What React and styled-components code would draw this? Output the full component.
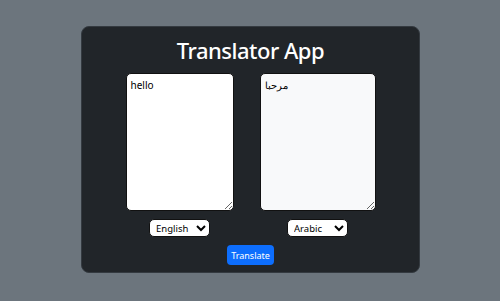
import React, { useState } from "react"
import styled, { createGlobalStyle } from "styled-components"

const GlobalStyle = createGlobalStyle`
    html, body {
        margin: 0;
        padding: 0;
        background-color: #6c757d;
        font-family: "Noto Sans", "Open Sans", sans-serif;
    }
`

const StyledPage = styled.div`
    width: 500px;
    height: 301px;
    box-sizing: border-box;
    padding-top: 26px;
    display: flex;
    justify-content: center;
    align-items: flex-start;
`
const StyledCard = styled.div`
    background-color: #212529;
    border: 1px solid #343a40;
    border-radius: 8px;
    width: 339px;
    height: 247px;
    box-sizing: border-box;
    margin-left: 1px;
    display: flex;
    flex-direction: column;
    align-items: center;
    padding-top: 7px;
`
const StyledTitle = styled.h1`
    color: #fff;
    font-size: 22px;
    font-weight: 500;
    letter-spacing: -0.5px;
    margin: 0;
    line-height: 32px;
`
const StyledRow = styled.div`
    display: flex;
    gap: 26px;
    margin-top: 7px;
`
const StyledColumn = styled.div`
    display: flex;
    flex-direction: column;
    align-items: center;
    gap: 8px;
`
const StyledText = styled.textarea`
    width: ${props => props.$width}px;
    height: 138px;
    box-sizing: border-box;
    background-color: ${props => props.$muted ? "#f8f9fa" : "#fff"};
    color: #000;
    border: 1px solid #111;
    border-radius: 5px;
    padding: 4px 4px;
    font-family: "Noto Sans", "Open Sans", sans-serif;
    font-size: 10px;
    resize: vertical;
    outline: none;
`
const StyledSelect = styled.select`
    width: 61px;
    height: 18px;
    font-family: "Noto Sans", "Open Sans", sans-serif;
    font-size: 9.5px;
    border: 1px solid #111;
    border-radius: 5px;
    background-color: #fff;
    color: #000;
    padding: 0 2px;
`
const StyledButton = styled.button`
    margin-top: 8px;
    background-color: #0d6efd;
    color: #fff;
    border: none;
    border-radius: 4px;
    width: 47px;
    height: 20px;
    font-family: "Noto Sans", "Open Sans", sans-serif;
    font-size: 9px;
    padding: 0;
`

const App = () => {
    const [text, setText] = useState("hello")

    return (
        <>
            <GlobalStyle />
            <StyledPage>
                <StyledCard>
                    <StyledTitle>Translator App</StyledTitle>
                    <StyledRow>
                        <StyledColumn>
                            <StyledText $width={108} value={text} onChange={e => setText(e.target.value)} />
                            <StyledSelect defaultValue="en">
                                <option value="en">English</option>
                                <option value="ar">Arabic</option>
                            </StyledSelect>
                        </StyledColumn>
                        <StyledColumn>
                            <StyledText $width={116} $muted readOnly value="مرحبا" />
                            <StyledSelect defaultValue="ar">
                                <option value="en">English</option>
                                <option value="ar">Arabic</option>
                            </StyledSelect>
                        </StyledColumn>
                    </StyledRow>
                    <StyledButton>Translate</StyledButton>
                </StyledCard>
            </StyledPage>
        </>
    )
}

export default App
